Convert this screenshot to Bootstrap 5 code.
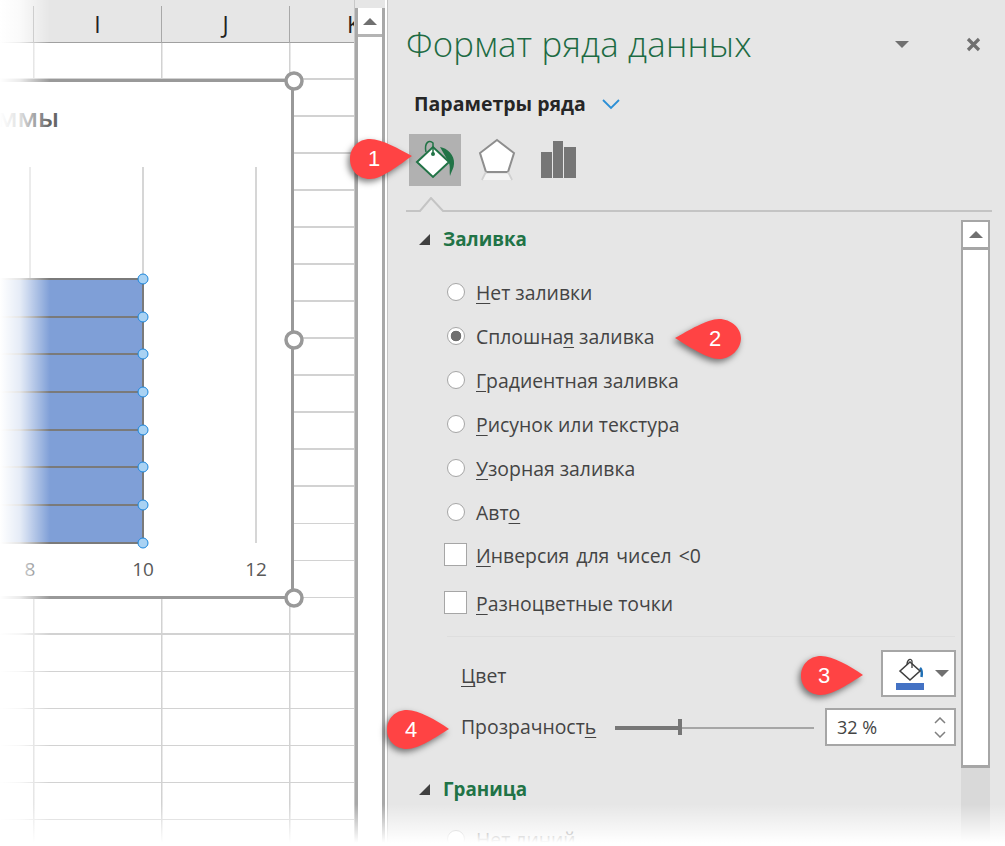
<!DOCTYPE html>
<html lang="ru">
<head>
<meta charset="UTF-8">
<title>Формат ряда данных</title>
<link href="https://cdn.jsdelivr.net/npm/bootstrap@5.3.0/dist/css/bootstrap.min.css" rel="stylesheet">
<style>
html, body { margin: 0; background: #fff; }
.app { width: 1005px; height: 846px; overflow: hidden; font-family: "Open Sans", "Noto Sans", sans-serif; color: #444; }

/* sheet */
.sheet { width: 355px; flex: none; overflow: hidden; border-right: 1px solid #c8c8c8; }
.sheet-head { height: 43px; background: #e6e6e6; border-bottom: 1.5px solid #a0a0a0; }
.col-cell { width: 128px; flex: none; height: 37px; margin-top: 6px; border-right: 1.5px solid #a8a8a8; font-size: 23px; color: #222; line-height: 37px; text-align: center; }
.col-first { width: 34px; }
.col-last { width: 65px; border-right: 0; text-align: left; padding-left: 57px; }
.sheet-grid { height: 803px;
  background-image:
    linear-gradient(90deg, #d2d2d2, #d2d2d2),
    linear-gradient(90deg, #d2d2d2, #d2d2d2),
    linear-gradient(90deg, #d2d2d2, #d2d2d2);
  background-size: 1.5px 100%, 1.5px 100%, 1.5px 100%;
  background-position: 33px 0, 161px 0, 289px 0;
  background-repeat: no-repeat;
}
.sheet-rows { height: 803px; background: repeating-linear-gradient(180deg, transparent 0, transparent 35.5px, #d2d2d2 35.5px, #d2d2d2 37px); }
.chart-box { position: absolute; left: -20px; top: 79px; width: 314px; height: 520px; background: #fff; border: 3px solid #999; border-left: 0; }
.chart-svg { position: absolute; left: 0; top: 0; }
.chart-name { position: absolute; left: 17px; top: 17px; font-size: 26px; font-weight: 600; color: #666; line-height: 36px; }
.fade-left { position: absolute; left: 0; top: 0; width: 52px; height: 846px; background: linear-gradient(90deg, #fff 0, rgba(255,255,255,.8) 20px, rgba(255,255,255,0) 50px); }
.fade-bottom { position: absolute; left: 0; bottom: 0; width: 1005px; height: 42px; background: linear-gradient(180deg, rgba(255,255,255,0), #fff 92%); }

/* outer scrollbar */
.outer-scroll { width: 30px; flex: none; border-left: 3px solid #a8a8a8; border-right: 3px solid #a8a8a8; background: #fff; }
.outer-top { height: 8px; background: #e6e6e6; margin: 0 -3px; }
.scroll-up { height: 29px; display: flex; align-items: center; justify-content: center; border-bottom: 3px solid #b4b4b4; background: #fff; }
.tri-up { width: 0; height: 0; border-left: 7px solid transparent; border-right: 7px solid transparent; border-bottom: 7px solid #707070; }
.tri-down { width: 0; height: 0; border-left: 7px solid transparent; border-right: 7px solid transparent; border-top: 7px solid #707070; }

/* panel */
.side { width: 620px; flex: none; background: #e6e6e6; padding-left: 18px; border-left: 1px solid #c4c4c4; margin-left: 2px; }
.side-title { height: 88px; padding-right: 26px; }
.side-title h1 { margin: 0; font-size: 34.8px; font-weight: 300; color: #1d6b43; letter-spacing: .2px; white-space: nowrap; }
.series-head { height: 32px; padding-left: 8px; font-size: 19.5px; font-weight: 700; color: #262626; gap: 15px; }
.tab-row { margin: 14px 0 0 3px; gap: 10px; }
.tab-tile { width: 52px; height: 52px; }
.tab-on { background: #b1b1b1; }
.tab-sep { display: block; margin-top: 11px; }
.panel-body { width: 584px; }
.panel-main { width: 555px; padding-left: 13px; }
.sect-head { height: 32px; margin-top: 10px; font-size: 18.8px; font-weight: 700; color: #217346; gap: 13px; }
.tri-corner { width: 0; height: 0; border-left: 11px solid transparent; border-bottom: 11px solid #404040; }
.opt-list { margin-top: 16px; padding-left: 28px; }
.opt-row { height: 44px; font-size: 19.4px; gap: 11px; margin: 0; color: #444; white-space: nowrap; }
.opt-row u { text-underline-offset: 3px; text-decoration-thickness: 1px; }
.opt-row .form-check-input { width: 18px; height: 18px; margin: 0 0 3px 0; flex: none; background-color: #fff; border: 1px solid #a6a6a6; box-shadow: none; }
.opt-row .form-check-input:checked[type=radio] { background-color: #fff; border-color: #a6a6a6; background-image: radial-gradient(circle, #707070 0, #707070 5px, #fff 5.6px); }
.check-row { height: 42px; font-size: 19.4px; margin: 0 0 6px 0; padding-left: 25px; gap: 9px; color: #444; }
.check-row .form-check-input { width: 23px; height: 23px; margin: 0 0 3px 0; flex: none; border: 1px solid #a6a6a6; border-radius: 0; background-color: #fff; }
.check-row u, .prop-label u { text-underline-offset: 3px; text-decoration-thickness: 1px; }
.wide-words { word-spacing: 2px; }
.hair { height: 1px; background: #dedede; margin: 11px 6px 0 28px; }
.prop-row { padding-left: 42px; padding-right: 5px; font-size: 19.4px; color: #444; }
.color-row { height: 47px; margin-top: 13px; }
.color-row .prop-label { padding-top: 5px; }
.color-btn { width: 75px; height: 47px; border: 2px solid #a6a6a6; border-radius: 0; background: #fff; padding: 0 0 0 6px; gap: 10px; }
.alpha-row { height: 38px; margin-top: 11px; }
.prop-name { width: 154px; flex: none; }
.slider-track { width: 199px; height: 18px; margin-right: 11px; flex: none; }
.spin-box { width: 131px; height: 38px; border: 2px solid #a6a6a6; background: #fff; padding: 0 8px 0 10px; font-size: 18px; }
.spin-arrows { line-height: 0; gap: 7px; }
.inner-scroll { width: 29px; height: 640px; margin-top: 7px; }
.inner-btn { height: 30px; border: 2px solid #a6a6a6; border-bottom-width: 3px; background: #fff; }
.inner-thumb { height: 518px; border: 2px solid #a6a6a6; border-top: 0; border-bottom-width: 3px; background: #fff; }
.inner-track { height: 90px; background: #d9d9d9; }

/* callouts */
.pin { position: absolute; width: 64px; height: 42px; }
.pin svg { position: absolute; left: 0; top: 0; overflow: visible; filter: drop-shadow(-2px 3px 3px rgba(0,0,0,.5)); }
.pin span { position: absolute; top: 0; width: 42px; text-align: center; color: #fff; font: 22px/42px "Liberation Sans", sans-serif; }
.pin-1 { left: 349px; top: 138px; }
.pin-2 { left: 675px; top: 318px; }
.pin-3 { left: 800px; top: 655px; }
.pin-4 { left: 386px; top: 709px; }
</style>
</head>
<body>
<div class="app d-flex position-relative">

  <div class="sheet position-relative">
    <div class="sheet-head d-flex">
      <div class="col-cell col-first"></div>
      <div class="col-cell">I</div>
      <div class="col-cell">J</div>
      <div class="col-cell col-last">K</div>
    </div>
    <div class="sheet-grid"><div class="sheet-rows"></div></div>

    <div class="chart-box">
      <div class="chart-name">ммы</div>
      <svg class="chart-svg" width="314" height="514" viewBox="-20 82 314 514">
        <g stroke="#d6d6d6" stroke-width="2">
          <line x1="30" y1="167" x2="30" y2="543"/>
          <line x1="143" y1="167" x2="143" y2="543"/>
          <line x1="256" y1="167" x2="256" y2="543"/>
        </g>
        <rect x="-20" y="279" width="163" height="264" fill="#7f9fd7"/>
        <g stroke="#7a7a7a" stroke-width="2">
          <line x1="-20" y1="279" x2="143" y2="279"/>
          <line x1="-20" y1="317" x2="143" y2="317"/>
          <line x1="-20" y1="354" x2="143" y2="354"/>
          <line x1="-20" y1="392" x2="143" y2="392"/>
          <line x1="-20" y1="430" x2="143" y2="430"/>
          <line x1="-20" y1="467" x2="143" y2="467"/>
          <line x1="-20" y1="505" x2="143" y2="505"/>
          <line x1="-20" y1="543" x2="143" y2="543"/>
          <line x1="143" y1="279" x2="143" y2="543"/>
        </g>
        <g fill="#a9d2f3" stroke="#1b86dc" stroke-width="1">
          <circle cx="143" cy="279" r="5"/>
          <circle cx="143" cy="317" r="5"/>
          <circle cx="143" cy="354" r="5"/>
          <circle cx="143" cy="392" r="5"/>
          <circle cx="143" cy="430" r="5"/>
          <circle cx="143" cy="467" r="5"/>
          <circle cx="143" cy="505" r="5"/>
          <circle cx="143" cy="543" r="5"/>
        </g>
        <g font-family="Open Sans, sans-serif" font-size="19" fill="#595959" text-anchor="middle">
          <text x="30" y="576">8</text>
          <text x="143" y="576">10</text>
          <text x="256" y="576">12</text>
        </g>
      </svg>
    </div>
    <svg class="position-absolute top-0 start-0" width="355" height="620">
      <g fill="#fff" stroke="#999" stroke-width="3.5">
        <circle cx="294" cy="81" r="8"/>
        <circle cx="294" cy="340" r="8"/>
        <circle cx="294" cy="598" r="8"/>
      </g>
    </svg>
    <div class="fade-left"></div>
  </div>

  <div class="outer-scroll">
    <div class="outer-top"></div>
    <div class="scroll-up"><div class="tri-up"></div></div>
  </div>

  <div class="side">
    <div class="side-title d-flex align-items-center justify-content-between">
      <h1>Формат ряда данных</h1>
      <div class="d-flex align-items-center" style="gap:57px">
        <div class="tri-down"></div>
        <svg width="15" height="15" viewBox="0 0 15 15"><path d="M2 2 13 13M13 2 2 13" stroke="#707070" stroke-width="3.2"/></svg>
      </div>
    </div>

    <div class="series-head d-flex align-items-center">
      <span>Параметры ряда</span>
      <svg width="20" height="12" viewBox="0 0 20 12"><path d="M2 2 10 10 18 2" fill="none" stroke="#2b8fd6" stroke-width="1.8"/></svg>
    </div>

    <div class="tab-row d-flex">
      <div class="tab-tile tab-on">
        <svg width="52" height="52" viewBox="0 0 52 52">
          <path d="M31 13C38 14 46 21 45 30C45 34 42 38 41 42C40 36 42 32 39 27Z" fill="#217346"/>
          <path d="M8 28 24 13 40 28 24 43Z" fill="#fff" stroke="#217346" stroke-width="2"/>
          <path d="M17 18C15 9 20 5 24 9L24 20" fill="none" stroke="#217346" stroke-width="1.5"/>
          <circle cx="24" cy="20" r="2" fill="#217346"/>
        </svg>
      </div>
      <div class="tab-tile">
        <svg width="52" height="52" viewBox="0 0 52 52">
          <path d="M26 6 43 19 37 38H15L9 19Z" fill="#fff" stroke="#8e8e8e" stroke-width="2"/>
          <path d="M15 38 11 46M37 38 41 46" stroke="#d0d0d0" stroke-width="2"/>
          <path d="M15 40H37L40 46H12Z" fill="#f4f4f4"/>
        </svg>
      </div>
      <div class="tab-tile">
        <svg width="52" height="52" viewBox="0 0 52 52">
          <path d="M8 18H19V44H8ZM20 7H30V44H20ZM31 13H43V44H31Z" fill="#767676"/>
        </svg>
      </div>
    </div>

    <svg class="tab-sep" width="586" height="16" viewBox="0 0 586 16">
      <path d="M0 14H14L25 1 37 14H586" fill="none" stroke="#c4c4c4" stroke-width="2"/>
    </svg>

    <div class="panel-body d-flex">
      <div class="panel-main">
        <div class="sect-head d-flex align-items-center"><div class="tri-corner"></div>Заливка</div>
        <div class="opt-list">
          <label class="opt-row d-flex align-items-center"><input class="form-check-input" type="radio" name="fill"><span><u>Н</u>ет заливки</span></label>
          <label class="opt-row d-flex align-items-center"><input class="form-check-input" type="radio" name="fill" checked><span>Сплошна<u>я</u> заливка</span></label>
          <label class="opt-row d-flex align-items-center"><input class="form-check-input" type="radio" name="fill"><span><u>Г</u>радиентная заливка</span></label>
          <label class="opt-row d-flex align-items-center"><input class="form-check-input" type="radio" name="fill"><span><u>Р</u>исунок или текстура</span></label>
          <label class="opt-row d-flex align-items-center"><input class="form-check-input" type="radio" name="fill"><span><u>У</u>зорная заливка</span></label>
          <label class="opt-row d-flex align-items-center"><input class="form-check-input" type="radio" name="fill"><span>Авт<u>о</u></span></label>
        </div>
        <label class="check-row d-flex align-items-center"><input class="form-check-input" type="checkbox"><span class="wide-words"><u>И</u>нверсия для чисел &lt;0</span></label>
        <label class="check-row d-flex align-items-center"><input class="form-check-input" type="checkbox"><span><u>Р</u>азноцветные точки</span></label>
        <div class="hair"></div>
        <div class="prop-row color-row d-flex align-items-center justify-content-between">
          <span class="prop-label"><u>Ц</u>вет</span>
          <button type="button" class="btn color-btn d-flex align-items-center justify-content-center">
            <svg width="30" height="34" viewBox="0 0 30 34">
              <path d="M25 11C27 13 27 17 26.500 20" fill="none" stroke="#1f6fb5" stroke-width="2.500"/>
              <path d="M5 14 15 5 25 14 15 23Z" fill="#fff" stroke="#404040" stroke-width="1.600"/>
              <path d="M12 8C12 2 16 1 17 4L17 11" fill="none" stroke="#404040" stroke-width="1.300"/>
              <rect x="1" y="26" width="28" height="7" fill="#4472c4"/>
            </svg>
            <span class="tri-down"></span>
          </button>
        </div>
        <div class="prop-row alpha-row d-flex align-items-center">
          <span class="prop-name prop-label">Прозрачност<u>ь</u></span>
          <svg class="slider-track" viewBox="0 0 199 18">
            <rect x="0" y="9" width="199" height="2" fill="#a6a6a6"/>
            <rect x="0" y="8" width="64" height="4" fill="#767676"/>
            <rect x="63" y="1" width="4" height="16" fill="#767676"/>
          </svg>
          <div class="spin-box d-flex align-items-center justify-content-between">
            <span>32 %</span>
            <div class="spin-arrows d-flex flex-column">
              <svg width="12" height="7" viewBox="0 0 12 7"><path d="M1 6 6 1 11 6" fill="none" stroke="#808080" stroke-width="1.500"/></svg>
              <svg width="12" height="7" viewBox="0 0 12 7"><path d="M1 1 6 6 11 1" fill="none" stroke="#808080" stroke-width="1.500"/></svg>
            </div>
          </div>
        </div>
        <div class="sect-head d-flex align-items-center" style="margin-top:27px"><div class="tri-corner"></div>Граница</div>
        <div class="opt-list" style="margin-top:13px">
          <label class="opt-row d-flex align-items-center"><input class="form-check-input" type="radio" name="line"><span><u>Н</u>ет линий</span></label>
        </div>
      </div>
      <div class="inner-scroll">
        <div class="inner-btn d-flex align-items-center justify-content-center"><div class="tri-up"></div></div>
        <div class="inner-thumb"></div>
        <div class="inner-track"></div>
      </div>
    </div>
  </div>

  <div class="fade-bottom"></div>

  <div class="pin pin-1">
    <svg width="64" height="42" viewBox="0 0 64 42"><path d="M21 1C33 1 50 11 63 18C50 27 33 41 21 41C9 41 1 32 1 21C1 10 9 1 21 1Z" fill="#ff4344"/></svg>
    <span style="left:4px">1</span>
  </div>
  <div class="pin pin-2">
    <svg width="64" height="42" viewBox="0 0 64 42"><path d="M44 1C56 1 66 10 66 20C66 31 56 41 44 41C32 41 13 28 0 20C13 13 32 1 44 1Z" fill="#ff4344"/></svg>
    <span style="left:19px">2</span>
  </div>
  <div class="pin pin-3">
    <svg width="64" height="42" viewBox="0 0 64 42"><path d="M21 1C33 1 50 11 63 20C50 28 33 40 21 40C9 40 1 31 1 21C1 10 9 1 21 1Z" fill="#ff4344"/></svg>
    <span style="left:3px">3</span>
  </div>
  <div class="pin pin-4">
    <svg width="64" height="42" viewBox="0 0 64 42"><path d="M21 1C33 1 50 11 63 20C50 28 33 40 21 40C9 40 1 31 1 21C1 10 9 1 21 1Z" fill="#ff4344"/></svg>
    <span style="left:4px">4</span>
  </div>
</div>
<script src="https://cdn.jsdelivr.net/npm/bootstrap@5.3.0/dist/js/bootstrap.bundle.min.js"></script>
</body>
</html>
